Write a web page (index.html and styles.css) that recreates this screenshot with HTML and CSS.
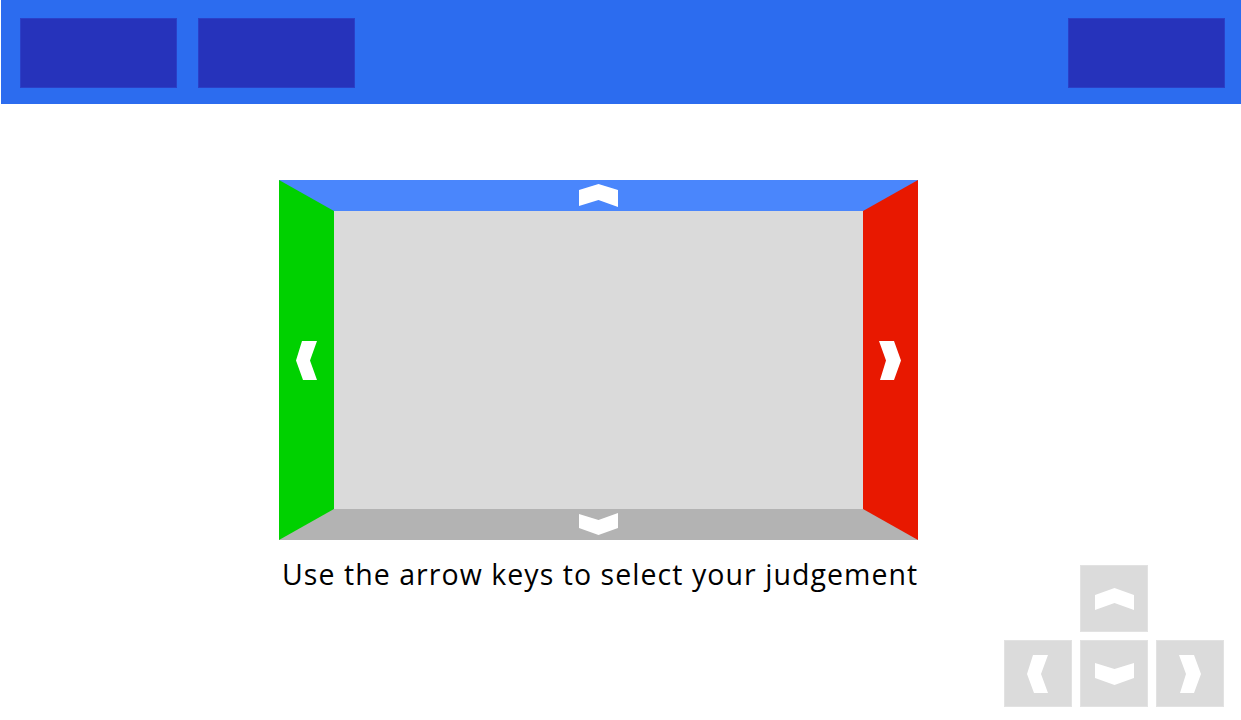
FILE: index.html
```html
<!DOCTYPE html>
<html>
<head>
<meta charset="utf-8">
<link rel="stylesheet" href="styles.css">
</head>
<body>
<header class="topbar">
  <div class="btn"></div>
  <div class="btn"></div>
  <div class="spacer"></div>
  <div class="btn"></div>
</header>
<main class="main">
  <section class="task">
    <div class="stage">
      <div class="box"></div>
      <svg class="arrow arrow-up" width="39" height="24" viewBox="0 0 39 24"><path d="M0 6 L19.5 0 L39 6 L39 23 L19.5 16 L0 22 Z" fill="#fff"/></svg>
      <svg class="arrow arrow-down" width="39" height="22" viewBox="0 0 39 22"><path d="M0 1 L19.5 7 L39 0 L39 15 L19.5 22 L0 15 Z" fill="#fff"/></svg>
      <svg class="arrow arrow-left" width="22" height="39" viewBox="0 0 22 39"><path d="M6 0 L21 0 L14 19.5 L21 39 L7 39 L0 19.5 Z" fill="#fff"/></svg>
      <svg class="arrow arrow-right" width="22" height="39" viewBox="0 0 22 39"><path d="M0 0 L15 0 L22 19.5 L15 39 L1 39 L7 19.5 Z" fill="#fff"/></svg>
    </div>
    <p class="hint">Use the arrow keys to select your judgement</p>
  </section>
  <aside class="keys">
    <div class="key key-up"><svg width="39" height="22" viewBox="0 0 39 22"><path d="M0 7 L19.5 0 L39 7 L39 22 L19.5 15 L0 22 Z" fill="#fff"/></svg></div>
    <div class="key key-left"><svg width="22" height="38" viewBox="0 0 22 38"><path d="M6 0 L21 0 L14 19 L21 38 L7 38 L0 19 Z" fill="#fff"/></svg></div>
    <div class="key key-down"><svg width="39" height="22" viewBox="0 0 39 22"><path d="M0 0 L19.5 6 L39 0 L39 15 L19.5 22 L0 15 Z" fill="#fff"/></svg></div>
    <div class="key key-right"><svg width="22" height="38" viewBox="0 0 22 38"><path d="M0 0 L15 0 L22 19 L15 38 L1 38 L7 19 Z" fill="#fff"/></svg></div>
  </aside>
</main>
</body>
</html>
```
FILE: styles.css
```css
* { box-sizing: border-box; }
html, body { margin: 0; padding: 0; background: #fff; }
body {
  width: 1241px;
  height: 720px;
  overflow: hidden;
  font-family: "Open Sans", "Noto Sans", sans-serif;
}
.topbar {
  margin-left: 1px;
  height: 104px;
  background: #2c6cef;
  display: flex;
  align-items: flex-start;
  gap: 21px;
  padding: 18px 16px 0 19px;
}
.btn {
  width: 157px;
  height: 70px;
  background: #2633bb;
  border: 1px solid #2a40c8;
}
.spacer { flex: 1; }
.main {
  display: flex;
  align-items: flex-start;
  padding: 76px 17px 0 279px;
}
.task { width: 639px; }
.stage {
  position: relative;
  width: 639px;
  height: 360px;
}
.box {
  width: 639px;
  height: 360px;
  background: #dadada;
  border-style: solid;
  border-width: 31px 55px 31px 55px;
  border-color: #4a86fc #e81800 #b3b3b3 #00d100;
}
.arrow { position: absolute; display: block; }
.arrow-up { left: 300px; top: 4px; }
.arrow-down { left: 300px; top: 333px; }
.arrow-left { left: 17px; top: 161px; }
.arrow-right { left: 600px; top: 161px; }
.hint {
  margin: 15px 0 0 3px;
  font-size: 28.5px;
  letter-spacing: 1.05px;
  line-height: 38px;
  color: #000;
  white-space: nowrap;
}
.keys {
  margin-left: auto;
  margin-top: 385px;
  display: grid;
  grid-template-columns: repeat(3, 68px);
  grid-template-rows: 67px 67px;
  gap: 8px;
}
.key {
  background: #dbdbdb;
  border: 1px solid #e2e2e2;
  display: flex;
  align-items: center;
  justify-content: center;
}
.key svg { display: block; }
.key-up { grid-column: 2; grid-row: 1; }
.key-left { grid-column: 1; grid-row: 2; }
.key-down { grid-column: 2; grid-row: 2; }
.key-right { grid-column: 3; grid-row: 2; }
```
